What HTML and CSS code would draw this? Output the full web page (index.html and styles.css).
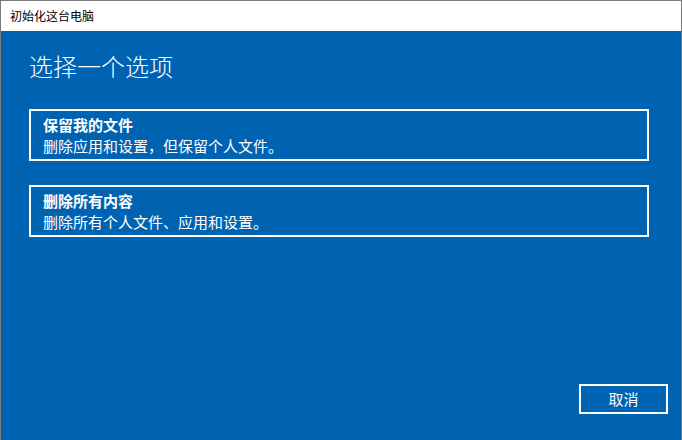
FILE: index.html
```html
<!DOCTYPE html>
<html lang="zh-CN">
<head>
<meta charset="utf-8">
<title>初始化这台电脑</title>
<link rel="stylesheet" href="styles.css">
</head>
<body>
<div class="window">
  <div class="titlebar">初始化这台电脑</div>
  <div class="content">
    <div class="main">
      <h1 class="heading">选择一个选项</h1>
      <div class="option">
        <div class="option-title">保留我的文件</div>
        <div class="option-desc">删除应用和设置，但保留个人文件。</div>
      </div>
      <div class="option">
        <div class="option-title">删除所有内容</div>
        <div class="option-desc">删除所有个人文件、应用和设置。</div>
      </div>
    </div>
    <div class="footer">
      <button class="btn">取消</button>
    </div>
  </div>
</div>
</body>
</html>
```
FILE: styles.css
```css
* { box-sizing: border-box; }
html, body { margin: 0; padding: 0; }
body {
  width: 682px;
  height: 440px;
  overflow: hidden;
  font-family: "Noto Sans CJK SC", "Noto Sans", sans-serif;
  background: #0063b1;
}
.window {
  width: 682px;
  height: 440px;
  display: flex;
  flex-direction: column;
  border: 1px solid #7a7a7a;
  border-bottom: none;
}
.titlebar {
  height: 30px;
  background: #ffffff;
  color: #000000;
  font-size: 12px;
  line-height: 30px;
  padding-left: 9px;
}
.content {
  flex: 1;
  background: #0063b1;
  color: #ffffff;
  display: flex;
  flex-direction: column;
}
.main {
  flex: 1;
  padding: 19px 32px 0 28px;
}
.heading {
  margin: 0 0 27px 0;
  font-size: 24px;
  font-weight: 300;
  line-height: 32px;
  padding-left: 0;
}
.option {
  border: 2px solid #ffffff;
  padding: 3px 12px 3px 12px;
  margin-bottom: 24px;
  font-size: 15px;
  line-height: 21px;
}
.option-title {
  font-weight: 700;
}
.option-desc {
  font-weight: 400;
}
.footer {
  display: flex;
  justify-content: flex-end;
  padding: 0 13px 26px 0;
}
.btn {
  width: 89px;
  height: 30px;
  border: 2px solid #ffffff;
  background: transparent;
  color: #ffffff;
  font-family: "Noto Sans CJK SC", "Noto Sans", sans-serif;
  font-size: 15px;
  padding: 0;
  line-height: 26px;
}
```
